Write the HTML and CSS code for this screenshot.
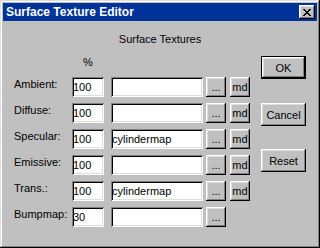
FILE: index.html
```html
<!DOCTYPE html>
<html lang="en">
<head>
  <meta charset="UTF-8">
  <title>Surface Texture Editor</title>
  <link rel="stylesheet" href="styles.css">
</head>
<body>
  <div class="window">
    <div class="titlebar">
      <span class="title">Surface Texture Editor</span>
      <button class="close" type="button">
        <svg width="8" height="7" viewBox="0 0 8 7" shape-rendering="crispEdges">
          <path d="M0 0h2v1h-2zM6 0h2v1h-2zM1 1h2v1h-2zM5 1h2v1h-2zM2 2h4v1h-4zM3 3h2v1h-2zM2 4h4v1h-4zM1 5h2v1h-2zM5 5h2v1h-2zM0 6h2v1h-2zM6 6h2v1h-2z" fill="#000"/>
        </svg>
      </button>
    </div>

    <div class="content">
      <div class="heading">Surface Textures</div>

      <div class="main">
        <div class="fields">
          <div class="pct">%</div>

          <div class="row">
            <label>Ambient:</label>
            <input class="num" type="text" value="100">
            <input class="txt" type="text" value="">
            <button type="button" class="dots">...</button>
            <button type="button" class="md">md</button>
          </div>
          <div class="row">
            <label>Diffuse:</label>
            <input class="num" type="text" value="100">
            <input class="txt" type="text" value="">
            <button type="button" class="dots">...</button>
            <button type="button" class="md">md</button>
          </div>
          <div class="row">
            <label>Specular:</label>
            <input class="num" type="text" value="100">
            <input class="txt" type="text" value="cylindermap">
            <button type="button" class="dots">...</button>
            <button type="button" class="md">md</button>
          </div>
          <div class="row">
            <label>Emissive:</label>
            <input class="num" type="text" value="100">
            <input class="txt" type="text" value="">
            <button type="button" class="dots">...</button>
            <button type="button" class="md">md</button>
          </div>
          <div class="row">
            <label>Trans.:</label>
            <input class="num" type="text" value="100">
            <input class="txt" type="text" value="cylindermap">
            <button type="button" class="dots">...</button>
            <button type="button" class="md">md</button>
          </div>
          <div class="row">
            <label>Bumpmap:</label>
            <input class="num" type="text" value="30">
            <input class="txt" type="text" value="">
            <button type="button" class="dots">...</button>
          </div>
        </div>

        <div class="actions">
          <button type="button" class="btn ok">OK</button>
          <button type="button" class="btn">Cancel</button>
          <button type="button" class="btn">Reset</button>
        </div>
      </div>
    </div>
  </div>
</body>
</html>
```

FILE: styles.css
```css
body {
  margin: 0;
  font-family: "Liberation Sans", Arial, sans-serif;
  font-size: 11px;
  color: #000;
}

.window {
  width: 320px;
  height: 248px;
  box-sizing: border-box;
  padding: 3px;
  background: #c0c0c0;
  box-shadow: inset -1px -1px #000, inset 1px 1px #dfdfdf,
              inset -2px -2px #808080, inset 2px 2px #fff;
}

.titlebar {
  height: 18px;
  background: #003399;
  display: flex;
  align-items: center;
  justify-content: space-between;
  padding: 0 2px 0 3px;
}

.title {
  color: #fff;
  font-weight: bold;
  font-size: 12px;
  line-height: 14px;
}

.close {
  width: 16px;
  height: 14px;
  padding: 0;
  border: none;
  background: #c0c0c0;
  display: flex;
  align-items: center;
  justify-content: center;
  box-shadow: inset -1px -1px #000, inset 1px 1px #fff,
              inset -2px -2px #808080, inset 2px 2px #dfdfdf;
}

.close svg {
  display: block;
}

.content {
  padding: 12px 11px 0 11px;
}

.heading {
  text-align: center;
  line-height: 13px;
}

.main {
  display: flex;
  justify-content: space-between;
  margin-top: 10px;
}

.pct {
  width: 32px;
  margin-left: 58px;
  text-align: center;
  line-height: 13px;
  margin-bottom: 8px;
}

.row {
  display: flex;
  height: 20px;
  margin-bottom: 6px;
}

.row label {
  width: 58px;
  line-height: 13px;
  padding-top: 1px;
}

.num,
.txt {
  height: 20px;
  box-sizing: border-box;
  border: none;
  padding: 0 1px;
  margin: 0;
  font-family: "Liberation Sans", Arial, sans-serif;
  font-size: 11px;
  line-height: 16px;
  color: #000;
  background: #fff;
  outline: none;
  box-shadow: inset 1px 1px #808080, inset -1px -1px #fff,
              inset 2px 2px #000, inset -2px -2px #dfdfdf;
}

.num {
  width: 32px;
}

.txt {
  width: 92px;
  margin-left: 7px;
}

.dots,
.md,
.btn {
  padding: 0;
  border: none;
  margin: 0;
  background: #c0c0c0;
  font-family: "Liberation Sans", Arial, sans-serif;
  font-size: 11px;
  color: #000;
  box-shadow: inset -1px -1px #000, inset 1px 1px #fff,
              inset -2px -2px #808080, inset 2px 2px #dfdfdf;
}

.dots,
.md {
  width: 20px;
  height: 20px;
}

.dots {
  margin-left: 3px;
}

.md {
  margin-left: 4px;
}

.actions {
  display: flex;
  flex-direction: column;
  gap: 23px;
}

.btn {
  width: 45px;
  height: 23px;
}

.ok {
  margin-bottom: 1px;
  box-shadow: inset 0 0 0 1px #000, inset -2px -2px #000, inset 2px 2px #fff,
              inset -3px -3px #808080, inset 3px 3px #dfdfdf;
}
```
